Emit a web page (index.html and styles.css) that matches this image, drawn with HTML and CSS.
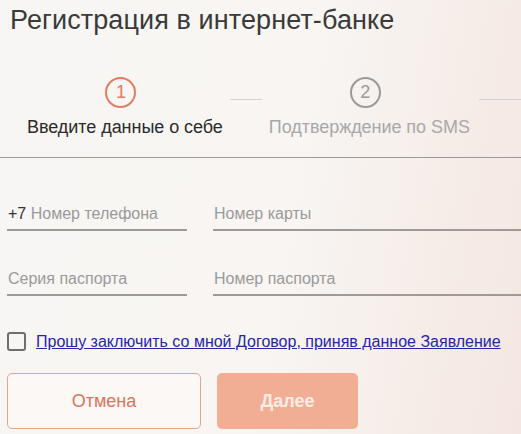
FILE: index.html
```html
<!DOCTYPE html>
<html lang="ru">
<head>
<meta charset="utf-8">
<link rel="stylesheet" href="styles.css">
</head>
<body>
<div class="page">
  <h1 class="title">Регистрация в интернет-банке</h1>
  <div class="steps">
    <div class="step step-active">
      <span class="step-num">1</span>
      <span class="step-label">Введите данные о себе</span>
    </div>
    <span class="connector"></span>
    <div class="step step-next">
      <span class="step-num">2</span>
      <span class="step-label">Подтверждение по SMS</span>
    </div>
    <span class="connector connector-end"></span>
  </div>
  <div class="divider"></div>
  <div class="fields">
    <div class="field"><span class="prefix">+7</span> <span class="ph">Номер телефона</span></div>
    <div class="field field-wide"><span class="ph">Номер карты</span></div>
    <div class="field"><span class="ph">Серия паспорта</span></div>
    <div class="field field-wide"><span class="ph">Номер паспорта</span></div>
  </div>
  <label class="agree">
    <span class="checkbox"></span>
    <a class="agree-link" href="#">Прошу заключить со мной Договор, приняв данное Заявление</a>
  </label>
  <div class="buttons">
    <button class="btn btn-cancel">Отмена</button>
    <button class="btn btn-next">Далее</button>
  </div>
</div>
</body>
</html>
```

FILE: styles.css
```css
html, body {
  margin: 0;
  padding: 0;
  height: 100%;
  overflow: hidden;
}
body {
  background: linear-gradient(100deg, #f8f6f4 0%, #f8f5f2 55%, #f6ede8 80%, #f4e7e2 100%);
  font-family: "Liberation Sans", Arial, sans-serif;
  color: #333;
}
.page {
  padding: 0 0 0 7px;
}
.title {
  margin: 0;
  padding: 5px 0 0 3px;
  font-family: "Liberation Sans", Arial, sans-serif;
  font-weight: normal;
  font-size: 27px;
  line-height: 30px;
  color: #3a3a3a;
  letter-spacing: 0.1px;
  white-space: nowrap;
}
.steps {
  display: flex;
  align-items: flex-start;
  margin-top: 42px;
  padding-left: 20px;
  white-space: nowrap;
}
.step {
  display: flex;
  flex-direction: column;
  align-items: center;
  flex: none;
}
.step-num {
  width: 27px;
  height: 27px;
  border-radius: 50%;
  border: 2px solid #e07c62;
  color: #e07c62;
  font-size: 18px;
  line-height: 27px;
  text-align: center;
  margin-right: 8px;
}
.step-next .step-num {
  border-color: #9a9a9a;
  color: #9a9a9a;
}
.step-label {
  margin-top: 9px;
  font-size: 18px;
  line-height: 20px;
  color: #2b2b2b;
  letter-spacing: -0.05px;
}
.step-next .step-label {
  color: #a8a8a8;
}
.connector {
  flex: none;
  width: 32px;
  height: 1px;
  background: #d6d2cf;
  margin: 22px 7px 0 7px;
}
.connector-end {
  width: 60px;
  margin-left: 9px;
}
.divider {
  height: 1px;
  background: #9c9896;
  margin: 20px 0 0 -7px;
}
.fields {
  display: grid;
  grid-template-columns: 180px 1fr;
  column-gap: 26px;
  row-gap: 36px;
  margin-top: 44px;
}
.field {
  height: 24px;
  padding-top: 3px;
  border-bottom: 2px solid #9e9a97;
  font-size: 16px;
  line-height: 18px;
  padding-left: 1px;
  white-space: nowrap;
}
.field-wide {
  margin-right: -20px;
}
.prefix {
  color: #333;
}
.ph {
  color: #9a9a9a;
}
.agree {
  display: flex;
  align-items: center;
  margin-top: 36px;
}
.checkbox {
  flex: none;
  width: 15px;
  height: 15px;
  border: 2px solid #6e6e6e;
  border-radius: 3px;
  margin-right: 10px;
}
.agree-link {
  font-size: 16px;
  color: #2626a8;
  text-decoration: underline;
  white-space: nowrap;
}
.buttons {
  display: flex;
  gap: 16px;
  margin-top: 22px;
}
.btn {
  height: 56px;
  border-radius: 5px;
  font-family: "Liberation Sans", Arial, sans-serif;
  font-size: 18px;
  cursor: pointer;
}
.btn-cancel {
  width: 194px;
  background: #fbf8f6;
  border: 1px solid #e2a58a;
  color: #d5775b;
}
.btn-next {
  width: 141px;
  background: #f1ae95;
  border: none;
  color: #fbede6;
  font-weight: bold;
}
```
